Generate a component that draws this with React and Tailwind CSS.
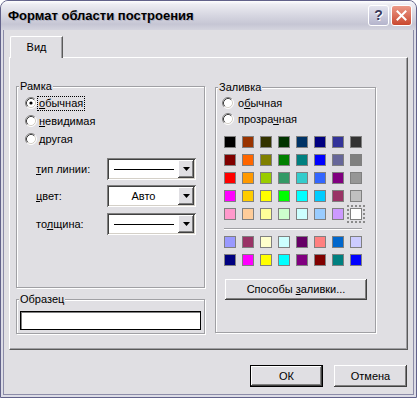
import React from "react";

const PALETTE = [
  ["#000000", "#993300", "#333300", "#003300", "#003366", "#000080", "#333399", "#333333"],
  ["#800000", "#FF6600", "#808000", "#008000", "#008080", "#0000FF", "#666699", "#808080"],
  ["#FF0000", "#FF9900", "#99CC00", "#339966", "#33CCCC", "#3366FF", "#800080", "#969696"],
  ["#FF00FF", "#FFCC00", "#FFFF00", "#00FF00", "#00FFFF", "#00CCFF", "#993366", "#C0C0C0"],
  ["#FF99CC", "#FFCC99", "#FFFF99", "#CCFFCC", "#CCFFFF", "#99CCFF", "#CC99FF", "#FFFFFF"],
];

const EXTRA = [
  ["#9999FF", "#993366", "#FFFFCC", "#CCFFFF", "#660066", "#FF8080", "#0066CC", "#CCCCFF"],
  ["#000080", "#FF00FF", "#FFFF00", "#00FFFF", "#800080", "#800000", "#008080", "#0000FF"],
];

const raised =
  "shadow-[inset_-1px_-1px_0_#404040,inset_1px_1px_0_#ffffff,inset_-2px_-2px_0_#808080]";

function Radio({ checked }) {
  return (
    <svg width="12" height="12" viewBox="0 0 12 12" className="shrink-0">
      <circle cx="6" cy="6" r="5" fill="#fff" />
      <path d="M2.11 9.89 A5.5 5.5 0 0 1 9.89 2.11" fill="none" stroke="#808080" />
      <path d="M9.89 2.11 A5.5 5.5 0 0 1 2.11 9.89" fill="none" stroke="#ffffff" />
      <path d="M2.82 9.18 A4.5 4.5 0 0 1 9.18 2.82" fill="none" stroke="#404040" />
      <path d="M9.18 2.82 A4.5 4.5 0 0 1 2.82 9.18" fill="none" stroke="#d4d0c8" />
      {checked && <circle cx="6" cy="6" r="1.6" fill="#000" />}
    </svg>
  );
}

function Arrow() {
  return (
    <svg width="7" height="4" viewBox="0 0 7 4">
      <path d="M0 0h7L3.5 4z" fill="#000" />
    </svg>
  );
}

function Combo({ children }) {
  return (
    <div className="w-[89px] h-[22px] flex bg-white p-[2px] shadow-[inset_1px_1px_0_#808080,inset_-1px_-1px_0_#ffffff,inset_2px_2px_0_#404040,inset_-2px_-2px_0_#d4d0c8]">
      <div className="flex-1 flex items-center justify-center">{children}</div>
      <div className={`w-[16px] h-full bg-[#e0dfe3] flex items-center justify-center ${raised}`}>
        <Arrow />
      </div>
    </div>
  );
}

function Group({ title, className, children }) {
  return (
    <fieldset
      className={`border border-[#a0a0a4] shadow-[1px_1px_0_#ffffff,inset_1px_1px_0_#ffffff] ${className}`}
    >
      <legend className="ml-[2px] px-[1px] bg-[#e0dfe3] leading-[13px]">{title}</legend>
      {children}
    </fieldset>
  );
}

function Swatch({ color, selected }) {
  return (
    <div
      className={`w-[12px] h-[12px] border border-[#808080] ${
        selected ? "outline-2 outline-dotted outline-offset-[1px] outline-[#8a8a8a]" : ""
      }`}
      style={{ backgroundColor: color }}
    />
  );
}

export default function App() {
  return (
    <div className="w-[417px] h-[398px] flex flex-col bg-[#e0dfe3] border border-[#62628a] rounded-t-[8px] overflow-hidden shadow-[inset_0_0_0_2px_#dcdce6,inset_0_0_0_3px_#8c8ca8] font-['Liberation_Sans',Arial,sans-serif] text-[11px] text-black">
      {/* title bar */}
      <div className="h-[29px] shrink-0 flex items-center pl-[7px] pr-[4px] bg-[linear-gradient(to_bottom,#ffffff_0%,#ececf2_12%,#d9d9e3_45%,#c6c6d4_80%,#d4d4de_100%)]">
        <div className="flex-1 font-bold text-[13px] [text-shadow:1px_1px_0_#b0b0c0]">
          Формат области построения
        </div>
        <div className="w-[21px] h-[21px] rounded-[3px] border border-white bg-[linear-gradient(to_bottom,#e4e4ee,#b4b4cc)] flex items-center justify-center font-bold text-[14px] text-[#3a3a5c] [text-shadow:1px_1px_0_#ffffff]">
          ?
        </div>
        <div className="ml-[2px] w-[21px] h-[21px] rounded-[3px] border border-white bg-[linear-gradient(to_bottom,#ec9a88,#c9472f)] flex items-center justify-center">
          <svg width="11" height="11" viewBox="0 0 11 11">
            <path d="M1.5 1.5l8 8M9.5 1.5l-8 8" stroke="#fff" strokeWidth="2" strokeLinecap="square" />
          </svg>
        </div>
      </div>

      {/* body */}
      <div className="flex-1 flex flex-col px-[8px] pt-[6px]">
        <div className="ml-[1px] w-[53px] h-[22px] -mb-px relative z-10 flex items-center justify-center bg-[#e0dfe3] border-l border-t border-white border-r border-r-[#5a5a5a] rounded-tl-[2px] shadow-[inset_-1px_0_0_#a0a0a4]">
          Вид
        </div>

        {/* tab panel */}
        <div className="h-[293px] flex items-start pl-[6px] pt-[22px] border-l border-t border-white border-r border-b border-r-[#5a5a5a] border-b-[#5a5a5a] shadow-[inset_-1px_-1px_0_#a0a0a4]">
          <div className="flex flex-col">
            <Group title="Рамка" className="w-[189px] h-[208px]">
              <div className="pl-[8px] pt-[1px]">
                <div className="h-[18px] flex items-center gap-[1px]">
                  <Radio checked />
                  <span className="px-[1px] outline outline-1 outline-dotted outline-black leading-[13px]">
                    <span className="underline underline-offset-1">о</span>бычная
                  </span>
                </div>
                <div className="h-[18px] flex items-center gap-[1px]">
                  <Radio />
                  <span className="px-[1px]">
                    <span className="underline underline-offset-1">н</span>евидимая
                  </span>
                </div>
                <div className="h-[18px] flex items-center gap-[1px]">
                  <Radio />
                  <span className="px-[1px]">другая</span>
                </div>

                <div className="mt-[10px] ml-[11px] flex items-center">
                  <span className="w-[71px]">
                    <span className="underline underline-offset-1">т</span>ип линии:
                  </span>
                  <Combo>
                    <div className="w-[60px] h-px bg-black" />
                  </Combo>
                </div>
                <div className="mt-[5px] ml-[11px] flex items-center">
                  <span className="w-[71px]">
                    <span className="underline underline-offset-1">ц</span>вет:
                  </span>
                  <Combo>Авто</Combo>
                </div>
                <div className="mt-[6px] ml-[11px] flex items-center">
                  <span className="w-[71px]">
                    то<span className="underline underline-offset-1">л</span>щина:
                  </span>
                  <Combo>
                    <div className="w-[60px] h-px bg-black" />
                  </Combo>
                </div>
              </div>
            </Group>

            <Group title="Образец" className="mt-[5px] w-[189px] h-[41px]">
              <div className="ml-[3px] mt-[5px] w-[181px] h-[19px] bg-white border border-black shadow-[inset_1px_1px_0_#808080]" />
            </Group>
          </div>

          <Group title="Заливка" className="ml-[10px] mt-[1px] w-[161px] h-[252px]">
            <div className="pl-[6px] pt-[1px]">
              <div className="h-[16px] flex items-center gap-[3px]">
                <Radio />
                <span className="px-[1px]">
                  о<span className="underline underline-offset-1">б</span>ычная
                </span>
              </div>
              <div className="h-[16px] flex items-center gap-[3px]">
                <Radio />
                <span className="px-[1px]">
                  прозра<span className="underline underline-offset-1">ч</span>ная
                </span>
              </div>
            </div>

            <div className="ml-[8px] mt-[9px] w-[138px]">
              <div className="grid grid-cols-8 gap-[6px]">
                {PALETTE.flat().map((c, i) => (
                  <Swatch key={i} color={c} selected={i === 39} />
                ))}
              </div>
              <div className="mt-[8px] h-[2px] border-t border-[#a0a0a4] border-b border-b-white" />
              <div className="mt-[6px] grid grid-cols-8 gap-[6px]">
                {EXTRA.flat().map((c, i) => (
                  <Swatch key={i} color={c} />
                ))}
              </div>
            </div>

            <div
              className={`ml-[9px] mt-[13px] w-[142px] h-[21px] flex items-center justify-center bg-[#e0dfe3] ${raised}`}
            >
              <span>
                Способы <span className="underline underline-offset-1">з</span>аливки...
              </span>
            </div>
          </Group>
        </div>

        {/* buttons */}
        <div className="mt-[15px] mr-[1px] flex justify-end gap-[11px]">
          <div className="w-[73px] h-[22px] border border-black">
            <div className={`w-full h-full flex items-center justify-center ${raised}`}>ОК</div>
          </div>
          <div className={`w-[73px] h-[22px] flex items-center justify-center ${raised}`}>
            Отмена
          </div>
        </div>
      </div>
    </div>
  );
}
